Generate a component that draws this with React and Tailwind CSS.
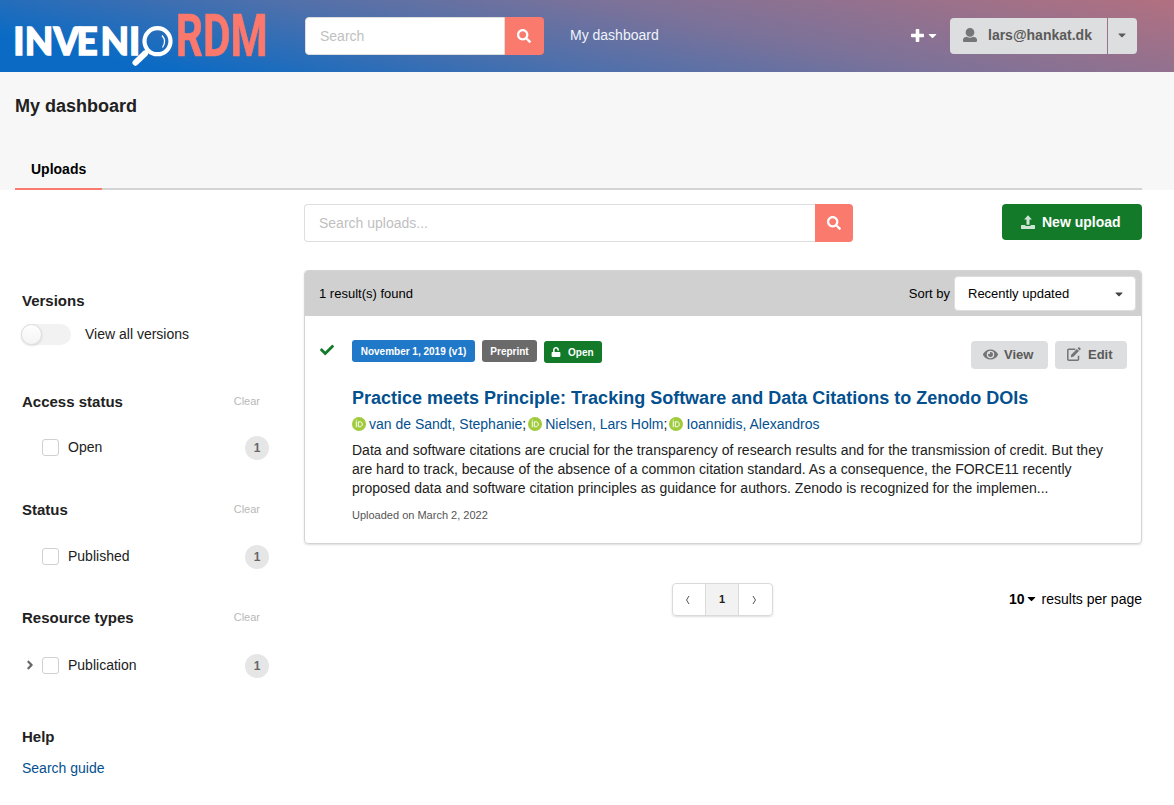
import React from "react";
import { FaSearch, FaCaretDown, FaCheck, FaUnlock, FaEye, FaAngleRight } from "react-icons/fa";

function UserIcon({ className }) {
  return (
    <svg viewBox="0 0 512 512" fill="currentColor" className={className}>
      <path d="M256 0c88.366 0 160 71.634 160 160s-71.634 160-160 160S96 248.366 96 160 167.634 0 256 0zm183.283 333.821l-71.313-17.828c-74.923 53.89-165.738 41.864-223.94 0l-71.313 17.828C29.981 344.505 0 382.903 0 426.955V464c0 26.51 21.49 48 48 48h416c26.51 0 48-21.49 48-48v-37.045c0-44.052-29.981-82.45-72.717-93.134z" />
    </svg>
  );
}

function PlusIcon({ className }) {
  return (
    <svg viewBox="0 0 448 512" fill="currentColor" className={className}>
      <path d="M448 294.2v-76.4c0-13.3-10.7-24-24-24H286.2V56c0-13.3-10.7-24-24-24h-76.4c-13.3 0-24 10.7-24 24v137.8H24c-13.3 0-24 10.7-24 24v76.4c0 13.3 10.7 24 24 24h137.8V456c0 13.3 10.7 24 24 24h76.4c13.3 0 24-10.7 24-24V318.2H424c13.3 0 24-10.7 24-24z" />
    </svg>
  );
}

function UploadIcon({ className }) {
  return (
    <svg viewBox="0 0 14 14" fill="currentColor" className={className}>
      <path d="M7 0.300L10.900 4.500H8.500V9.800H5.500V4.500H3.100Z" />
      <path d="M0.600 10H4.400V11H9.600V10H13.400Q14 10 14 10.600V13.400Q14 14 13.400 14H0.600Q0 14 0 13.400V10.600Q0 10 0.600 10Z" />
    </svg>
  );
}

function EditIcon({ className }) {
  return (
    <svg viewBox="0 0 14 14" fill="currentColor" className={className}>
      <path d="M8.300 2.200H1.800a1 1 0 0 0-1 1v9a1 1 0 0 0 1 1h8.700a1 1 0 0 0 1-1V8.800" fill="none" stroke="currentColor" strokeWidth="1.500" />
      <path d="M4.200 7.700L9.900 2L12 4.100L6.300 9.800L3.800 10.200Z" />
      <path d="M10.600 1.300l.8-.8c.3-.3.8-.3 1.100 0l1 1c.3.3.3.8 0 1.100l-.8.8Z" />
    </svg>
  );
}

function Logo() {
  return (
    <svg width="260" height="72" viewBox="0 0 260 72" className="block shrink-0 overflow-visible">
      <text x="-1.7 9.8 38.4 61.6 85.6 114" y="55" fill="#fff" stroke="#fff" strokeWidth="1.3" fontFamily="Lato, sans-serif" fontWeight="900" fontSize="37">INVENI</text>
      <g fill="none" stroke="#fff">
        <circle cx="142.5" cy="41.2" r="13" strokeWidth="4.2" />
        <path d="M132.5 50.5L129.5 53.5" strokeWidth="3.2" />
        <path d="M130 53.5L120.5 62.7" strokeWidth="6" strokeLinecap="round" />
        <path d="M147 35.5Q152 41 147.5 47.5" strokeWidth="1.3" />
      </g>
      <text x="160.8" y="56.3" fill="#fb786d" stroke="#fb786d" strokeWidth="0.6" fontFamily="Roboto, sans-serif" fontWeight="700" fontSize="59.5" textLength="92" lengthAdjust="spacingAndGlyphs">RDM</text>
    </svg>
  );
}

function Orcid() {
  return (
    <svg width="14" height="14" viewBox="0 0 256 256" className="mr-[3px] shrink-0">
      <circle cx="128" cy="128" r="128" fill="#a0cb3c" />
      <g fill="none" stroke="#fff" strokeWidth="18">
        <path d="M78.5 79V186" />
        <path d="M116 87V178.5H142C170 178.5 188 159 188 132.5S170 87 142 87Z" />
      </g>
      <circle cx="78.5" cy="57" r="10" fill="#fff" />
    </svg>
  );
}

function Facet({ title, label, expandable, className, rowClassName }) {
  return (
    <section className={className}>
      <div className="flex h-5 items-center justify-between pr-[9px]">
        <h2 className="text-[15px] font-bold text-[#212121]">{title}</h2>
        <span className="text-[11px] text-[#b9b9b9]">Clear</span>
      </div>
      <div className={`flex h-6 items-center ${rowClassName}`}>
        <span className="flex w-5 pl-px text-[#666]">{expandable && <FaAngleRight size={14} className="-mt-0.5" />}</span>
        <span className="-mt-px h-[17px] w-[17px] rounded-[3px] border border-[#d0d0d1] bg-white" />
        <span className="-mt-[3px] ml-[9px] text-sm">{label}</span>
        <span className="ml-auto flex h-6 w-6 items-center justify-center rounded-full bg-[#e6e6e6] text-xs font-bold text-[#666]">1</span>
      </div>
    </section>
  );
}

function Author({ name, last }) {
  return (
    <span className="flex items-center">
      <Orcid />
      <a className="text-[#04508f]">{name}</a>
      {!last && <span>;</span>}
    </span>
  );
}

export default function App() {
  return (
    <div className="h-[805px] overflow-hidden bg-white font-['Liberation_Sans',Arial,sans-serif] text-sm text-[#212121]">
      <header className="flex h-[72px] items-center bg-[linear-gradient(12deg,#0b6bc4_12%,#4f70ab_40%,#7c7299_62%,#b27080_100%)] pl-[15px]">
        <Logo />
        <div className="ml-[30px] flex h-[38px] w-[239px]">
          <div className="flex w-[200px] items-center rounded-l border border-[#dededf] bg-white pl-[14px] text-[#c0c0c0]">Search</div>
          <div className="flex flex-1 items-center justify-center rounded-r bg-[#fb7a6e] pr-[2px] text-white"><FaSearch size={14} /></div>
        </div>
        <span className="-mt-[3px] ml-[26px] text-[#f0f4fa]">My dashboard</span>
        <div className="-mt-[2px] ml-auto flex items-center gap-[2px] text-white">
          <PlusIcon className="h-[15px] w-[13px]" /><FaCaretDown size={13} />
        </div>
        <div className="ml-[11px] mr-[37px] flex h-9 gap-px text-[#5a5a5a]">
          <div className="flex w-[157px] items-center rounded-l bg-[#dddedf] pl-[13px] font-bold">
            <UserIcon className="-mt-[2px] mr-[11px] h-[14px] w-[14px] text-[#767676]" />
            <span className="-mt-[3px]">lars@hankat.dk</span>
          </div>
          <div className="flex w-[29px] items-center justify-center rounded-r bg-[#dddedf] pr-px pb-[2px]"><FaCaretDown size={12} /></div>
        </div>
      </header>

      <div className="h-[118px] bg-[#f7f7f7] pl-[15px] pr-8">
        <h1 className="pt-[20px] text-lg leading-7 font-bold">My dashboard</h1>
        <nav className="mt-[30px] flex h-10 border-b-2 border-[#d4d4d5]">
          <a className="-mb-0.5 w-[87px] border-b-2 border-[#fb7a6e] pl-4 leading-[38px] font-bold text-black">Uploads</a>
        </nav>
      </div>

      <div className="flex pl-[22px] pr-8">
        <aside className="w-[247px] pt-[101px]">
          <h2 className="text-[15px] leading-5 font-bold">Versions</h2>
          <div className="mt-[12px] -ml-px flex h-[22px] items-center">
            <span className="h-[21px] w-[50px] rounded-full bg-[#f2f2f2]">
              <span className="block h-[21px] w-[21px] rounded-full border border-[#dcdcdc] bg-linear-to-b from-white to-[#f4f4f4] shadow-[0_1px_2px_rgba(34,36,38,0.15)]" />
            </span>
            <span className="ml-[14px]">View all versions</span>
          </div>
          <Facet title="Access status" label="Open" className="mt-[47px]" rowClassName="mt-[24px]" />
          <Facet title="Status" label="Published" className="mt-[40px]" rowClassName="mt-[25px]" />
          <Facet title="Resource types" label="Publication" expandable className="mt-[39px]" rowClassName="mt-[26px]" />
          <h2 className="mt-[49px] text-[15px] leading-5 font-bold">Help</h2>
          <a className="mt-[11px] block leading-5 text-[#04508f]">Search guide</a>
        </aside>

        <main className="ml-[35px] w-[838px] pt-[14px]">
          <div className="flex justify-between">
            <div className="flex h-[38px] w-[549px]">
              <div className="flex flex-1 items-center rounded-l border border-r-0 border-[#dededf] pl-[14px] text-[#bfbfbf]">Search uploads...</div>
              <div className="flex w-[38px] items-center justify-center rounded-r bg-[#fb7a6e] text-white"><FaSearch size={14} /></div>
            </div>
            <button className="flex h-9 w-[140px] items-center rounded bg-[#127a29] pl-[19px] font-bold text-white">
              <UploadIcon className="mr-[7px] h-[14px] w-[14px] opacity-80" />New upload
            </button>
          </div>

          <section className="mt-[28px] h-[274px] rounded border border-[#d4d4d5] shadow-[0_1px_2px_rgba(34,36,38,0.15)]">
            <div className="flex h-[45px] items-center rounded-t-[3px] bg-[#d0d0d0] pl-[14px] pr-[5px] text-[13px] text-black">
              <span className="pt-[2px]">1 result(s) found</span>
              <span className="ml-auto mr-[4px] pt-[2px]">Sort by</span>
              <div className="flex h-[35px] w-[182px] items-center justify-between rounded border border-[#dededf] bg-white px-[13px]">
                <span className="pt-[2px]">Recently updated</span><FaCaretDown size={12} className="-mr-[3px] text-[#444]" />
              </div>
            </div>

            <article className="flex px-[14px] pt-[24px]">
              <FaCheck size={14} className="mt-[3px] mr-[18px] ml-px w-[14px] shrink-0 text-[#127a29]" />
              <div className="w-[775px] shrink-0">
                <div className="flex">
                  <div className="flex gap-[7px] text-[10px] leading-[23px] font-bold text-white">
                    <span className="h-[22px] w-[123px] rounded-[3px] bg-[#1f78c8] text-center">November 1, 2019 (v1)</span>
                    <span className="h-[22px] w-[55px] rounded-[3px] bg-[#6a6a6a] text-center">Preprint</span>
                    <span className="mt-px flex h-[22px] w-[58px] items-center rounded-[3px] bg-[#127a29] pl-[7px]"><FaUnlock size={10} className="mr-[7px]" />Open</span>
                  </div>
                  <div className="mt-px ml-auto flex gap-[7px] text-[13px] font-bold text-[#5a5a5a]">
                    <button className="flex h-7 w-[77px] items-center rounded bg-[#dddedf] pl-[12px]"><FaEye size={15} className="-mt-[2px] mr-[6px] opacity-80" />View</button>
                    <button className="flex h-7 w-[72px] items-center rounded bg-[#dddedf] pl-[12px]"><EditIcon className="-mt-[2px] mr-[7px] h-[14px] w-[14px] opacity-80" />Edit</button>
                  </div>
                </div>
                <h2 className="mt-[17px] text-[18px] leading-6 font-bold whitespace-nowrap text-[#04508f]">Practice meets Principle: Tracking Software and Data Citations to Zenodo DOIs</h2>
                <div className="mt-[4px] flex h-5 items-center gap-[2px] whitespace-nowrap">
                  <Author name="van de Sandt, Stephanie" />
                  <Author name="Nielsen, Lars Holm" />
                  <Author name="Ioannidis, Alexandros" last />
                </div>
                <p className="mt-[7px] leading-[19px] whitespace-nowrap">
                  Data and software citations are crucial for the transparency of research results and for the transmission of credit. But they<br />
                  are hard to track, because of the absence of a common citation standard. As a consequence, the FORCE11 recently<br />
                  proposed data and software citation principles as guidance for authors. Zenodo is recognized for the implemen...
                </p>
                <p className="mt-[9px] text-[11px] leading-4 text-[#555]">Uploaded on March 2, 2022</p>
              </div>
            </article>
          </section>

          <div className="mt-[39px] flex h-[33px] items-center">
            <div className="ml-[368px] flex h-[33px] w-[101px] items-center rounded border border-[#dadadb] text-center text-xs leading-[31px] shadow-[0_1px_2px_rgba(34,36,38,0.15)]">
              <span className="flex w-8 items-center justify-center pr-[2px] text-[#555]"><svg width="6" height="10" viewBox="0 0 6 10" fill="none" stroke="currentColor"><path d="M4 1L1.5 5L4 9" /></svg></span>
              <span className="w-[34px] border-x border-[#dadadb] bg-[#f2f2f2] text-[11px] font-bold">1</span>
              <span className="flex flex-1 items-center justify-center pr-[4px] text-[#555]"><svg width="6" height="10" viewBox="0 0 6 10" fill="none" stroke="currentColor"><path d="M2 1L4.5 5L2 9" /></svg></span>
            </div>
            <div className="ml-auto flex items-center pb-[2px] text-black">
              <b>10</b><FaCaretDown size={13} className="mr-[4px]" /><span>results per page</span>
            </div>
          </div>
        </main>
      </div>
    </div>
  );
}
